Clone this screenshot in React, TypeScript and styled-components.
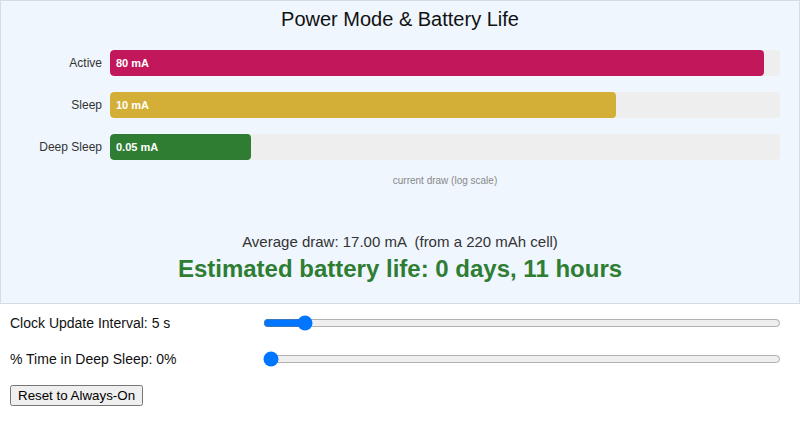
import React, { useState } from "react";
import styled, { createGlobalStyle } from "styled-components";

const GlobalStyle = createGlobalStyle`
  html, body { margin: 0; padding: 0; background: #fff; }
  body { font-family: "Liberation Sans", Arial, Helvetica, sans-serif; color: #222; }
`;

const Panel = styled.section`
  background: #eff6fe;
  border: 1px solid #d3dbe3;
  height: 304px;
  box-sizing: border-box;
  display: flex;
  flex-direction: column;
`;

const Title = styled.h2`
  margin: 7px 0 0;
  font-size: 20px;
  font-weight: normal;
  text-align: center;
  color: #111;
  line-height: 23px;
`;

const Chart = styled.div`
  margin-top: 19px;
  padding: 0 19px 0 9px;
  display: flex;
  flex-direction: column;
  gap: 16px;
`;

const BarRow = styled.div`
  display: grid;
  grid-template-columns: 92px 1fr;
  column-gap: 8px;
  align-items: center;
`;

const BarLabel = styled.div`
  text-align: right;
  font-size: 12px;
  color: #333;
`;

const Track = styled.div`
  height: 26px;
  background: #eeeeee;
  border-radius: 4px;
  overflow: hidden;
`;

const Fill = styled.div<{ $color: string }>`
  height: 100%;
  background: ${(p) => p.$color};
  border-radius: 4px;
  display: flex;
  align-items: center;
  padding-left: 6px;
  box-sizing: border-box;
  color: #fff;
  font-size: 11px;
  font-weight: bold;
  white-space: nowrap;
`;

const Caption = styled.div`
  margin: 15px 19px 0 109px;
  text-align: center;
  font-size: 10px;
  line-height: 12px;
  color: #888;
`;

const Summary = styled.div`
  margin-top: 46px;
  text-align: center;
`;

const AvgLine = styled.div`
  font-size: 15px;
  color: #333;
  line-height: 18px;
  white-space: pre;
`;

const LifeLine = styled.div`
  margin-top: 4px;
  font-size: 24px;
  font-weight: bold;
  color: #2e7d32;
  line-height: 28px;
`;

const Controls = styled.div`
  padding: 1px 10px 0;
  display: flex;
  flex-direction: column;
`;

const ControlRow = styled.label`
  display: grid;
  grid-template-columns: 253px 1fr;
  align-items: center;
  height: 36px;
  font-size: 14px;
  color: #111;
`;

const Slider = styled.input`
  width: calc(100% - 9px);
  margin: 0;
`;

const ResetButton = styled.button`
  margin-top: 8px;
  align-self: flex-start;
  font-family: "Liberation Sans", Arial, sans-serif;
  font-size: 13.333px;
`;

const modes = [
  { name: "Active", value: "80 mA", pct: 97.6, color: "#c2185b" },
  { name: "Sleep", value: "10 mA", pct: 75.5, color: "#d4af37" },
  { name: "Deep Sleep", value: "0.05 mA", pct: 21, color: "#2e7d32" },
];

export default function App() {
  const [interval, setIntervalValue] = useState(5);
  const [deep, setDeep] = useState(0);

  return (
    <>
      <GlobalStyle />
      <Panel>
        <Title>Power Mode &amp; Battery Life</Title>
        <Chart>
          {modes.map((m) => (
            <BarRow key={m.name}>
              <BarLabel>{m.name}</BarLabel>
              <Track>
                <Fill $color={m.color} style={{ width: `${m.pct}%` }}>
                  {m.value}
                </Fill>
              </Track>
            </BarRow>
          ))}
        </Chart>
        <Caption>current draw (log scale)</Caption>
        <Summary>
          <AvgLine>Average draw: 17.00 mA  (from a 220 mAh cell)</AvgLine>
          <LifeLine>Estimated battery life: 0 days, 11 hours</LifeLine>
        </Summary>
      </Panel>
      <Controls>
        <ControlRow>
          Clock Update Interval: {interval} s
          <Slider
            type="range"
            min={1}
            max={60}
            value={interval}
            onChange={(e) => setIntervalValue(Number(e.target.value))}
          />
        </ControlRow>
        <ControlRow>
          % Time in Deep Sleep: {deep}%
          <Slider
            type="range"
            min={0}
            max={100}
            value={deep}
            onChange={(e) => setDeep(Number(e.target.value))}
          />
        </ControlRow>
        <ResetButton
          onClick={() => {
            setIntervalValue(5);
            setDeep(0);
          }}
        >
          Reset to Always-On
        </ResetButton>
      </Controls>
    </>
  );
}
